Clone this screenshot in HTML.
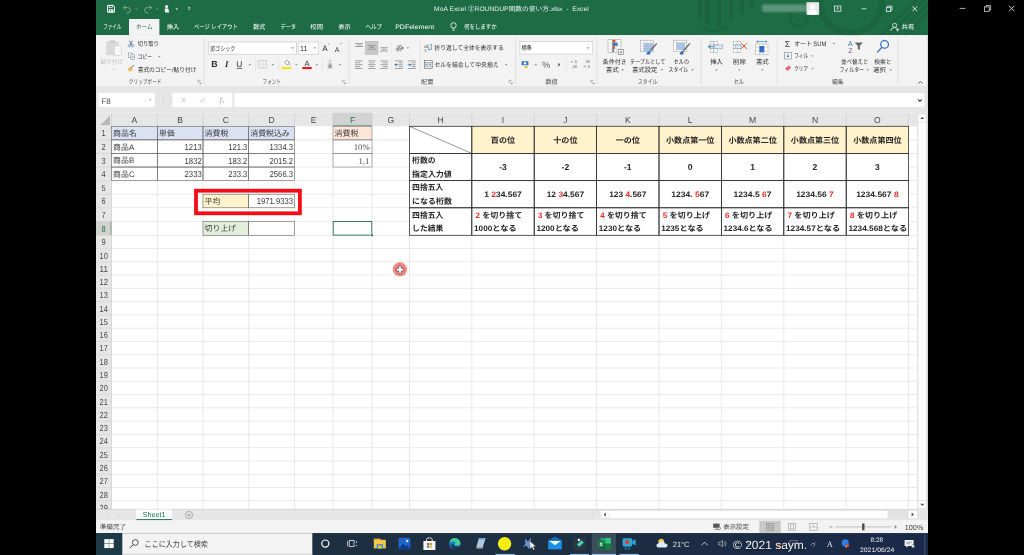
<!DOCTYPE html>
<html lang="ja">
<head>
<meta charset="utf-8">
<title>MoA Excel ②ROUNDUP関数の使い方.xlsx - Excel</title>
<style>
html,body{margin:0;padding:0;background:#000;width:1024px;height:555px;overflow:hidden}
svg{display:block;position:absolute;left:0;top:0;opacity:0.999;font-family:'Liberation Sans','Noto Sans CJK JP',sans-serif;}
text{white-space:pre;text-rendering:geometricPrecision}
</style>
</head>
<body>
<svg width="1024" height="555" viewBox="0 0 1024 555">
<rect x="0" y="0" width="1024" height="555" fill="#000000"/>
<g id="frame">
<rect x="96.00" y="0.00" width="832.00" height="533.20" fill="#ffffff" />
<rect x="96.00" y="0.00" width="832.00" height="35.20" fill="#1e6c46" />
<g fill="none" stroke="#195f3c" opacity="0.6"><circle cx="851" cy="2" r="31" stroke-width="6.5"/><circle cx="799" cy="17" r="9" stroke-width="3"/><path d="M889 35 L925 -1 M897 35 L928 4 M905 35 L928 12 M881 35 L917 -1" stroke-width="2.6"/><path d="M700 0 V19 M707.5 0 V25 M719 0 V27 M731 0 V20 M742 0 V14 M752 0 V9" stroke-width="4"/><path d="M703 27 q10 8 24 0" stroke-width="2.5"/></g>
<rect x="96.00" y="0.00" width="832.00" height="35.20" fill="none" />
<rect x="96.00" y="35.20" width="832.00" height="50.50" fill="#f3f3f3" />
<rect x="96.00" y="85.70" width="832.00" height="27.00" fill="#e6e6e6" />
</g>
<g id="titlebar">
<path d="M107.6 5.4 h5.8 l1 1 v5.8 h-6.8 z" fill="none" stroke="#ffffff" stroke-width="1.0" />
<rect x="109.10" y="5.40" width="3.20" height="2.20" fill="none" stroke="#ffffff" stroke-width="0.7" />
<rect x="108.80" y="9.30" width="4.40" height="2.90" fill="#ffffff" />
<rect x="110.10" y="10.20" width="0.90" height="1.20" fill="#1e6c46" />
<path d="M123.4 7.6000000000000005 h4.4 a2.6 2.6 0 0 1 0 5.2 h-1.2 M123.4 7.6000000000000005 l2.2 -2.2 M123.4 7.6000000000000005 l2.2 2.2" fill="none" stroke="#7fae95" stroke-width="0.9" />
<path d="M135.2 8.600000000000001 h2.2 l-1.1 1.2 z" fill="#7fae95" />
<path d="M151.6 7.6000000000000005 h-4.4 a2.6 2.6 0 0 0 0 5.2 h1.2 M151.6 7.6000000000000005 l-2.2 -2.2 M151.6 7.6000000000000005 l-2.2 2.2" fill="none" stroke="#7fae95" stroke-width="0.9" />
<path d="M156.1 8.600000000000001 h2.2 l-1.1 1.2 z" fill="#7fae95" />
<circle cx="166.60" cy="6.60" r="1.50" fill="#ffffff" />
<path d="M164.6 9.0 q2 -1.6 4 0 v2.2 q0.8 0 0.8 1.4 h-4.2 z" fill="#ffffff" />
<path d="M175.5 8.5 h2.6 l-1.3 1.4 z" fill="#ffffff" />
<path d="M187.9 8.700000000000001 h2.6 l-1.3 1.4 z" fill="#ffffff" />
<line x1="187.90" y1="7.30" x2="190.50" y2="7.30" stroke="#ffffff" stroke-width="0.6" />
<text x="434.10" y="11.10" font-size="6.4" fill="#e4efe8"  textLength="154.60" lengthAdjust="spacingAndGlyphs">MoA Excel ②ROUNDUP関数の使い方.xlsx  -  Excel</text>
<rect x="762" y="4.5" width="46" height="7.5" fill="#8fb9a3" opacity="0.55" rx="2" style="filter:blur(1.2px)"/>
<rect x="806.50" y="2.20" width="12.60" height="12.60" fill="#e8e8e8" />
<circle cx="812.80" cy="6.80" r="2.50" fill="#ffffff" />
<path d="M808.2 14.8 q0 -5 4.6 -5 q4.6 0 4.6 5 z" fill="#ffffff" />
<rect x="834.50" y="6.00" width="6.40" height="5.20" fill="none" stroke="#ffffff" stroke-width="0.7" />
<path d="M837.7 7.4 v2.6 M836.6 8.4 l1.1 -1.1 l1.1 1.1" fill="none" stroke="#ffffff" stroke-width="0.6" />
<line x1="861.50" y1="8.80" x2="866.50" y2="8.80" stroke="#ffffff" stroke-width="0.7" />
<rect x="886.30" y="7.30" width="4.40" height="4.20" fill="none" stroke="#ffffff" stroke-width="0.7" />
<path d="M887.6 7.3 v-1.2 h4.4 v4.2 h-1.3" fill="none" stroke="#ffffff" stroke-width="0.7" />
<path d="M912.4 6.4 l4.8 4.8 M917.2 6.4 l-4.8 4.8" fill="none" stroke="#ffffff" stroke-width="0.8" />
</g>
<g id="tabs">
<rect x="129.00" y="19.00" width="30.40" height="16.30" fill="#f3f3f3" />
<text x="103.20" y="28.60" font-size="6.4" fill="#ffffff"  textLength="18.20" lengthAdjust="spacingAndGlyphs">ファイル</text>
<text x="136.00" y="28.60" font-size="6.4" fill="#1e6c46"  textLength="16.40" lengthAdjust="spacingAndGlyphs">ホーム</text>
<text x="166.80" y="28.60" font-size="6.4" fill="#ffffff"  textLength="12.60" lengthAdjust="spacingAndGlyphs">挿入</text>
<text x="194.00" y="28.60" font-size="6.4" fill="#ffffff"  textLength="44.00" lengthAdjust="spacingAndGlyphs">ページ レイアウト</text>
<text x="253.20" y="28.60" font-size="6.4" fill="#ffffff"  textLength="12.00" lengthAdjust="spacingAndGlyphs">数式</text>
<text x="280.40" y="28.60" font-size="6.4" fill="#ffffff"  textLength="15.60" lengthAdjust="spacingAndGlyphs">データ</text>
<text x="310.30" y="28.60" font-size="6.4" fill="#ffffff"  textLength="12.70" lengthAdjust="spacingAndGlyphs">校閲</text>
<text x="338.20" y="28.60" font-size="6.4" fill="#ffffff"  textLength="12.60" lengthAdjust="spacingAndGlyphs">表示</text>
<text x="365.40" y="28.60" font-size="6.4" fill="#ffffff"  textLength="16.70" lengthAdjust="spacingAndGlyphs">ヘルプ</text>
<text x="395.20" y="28.60" font-size="6.4" fill="#ffffff"  textLength="39.00" lengthAdjust="spacingAndGlyphs">PDFelement</text>
<circle cx="453.50" cy="25.40" r="2.70" fill="none" stroke="#ffffff" stroke-width="0.8" />
<path d="M452.3 28.9 h2.4 M452.5 30.3 h2" fill="none" stroke="#ffffff" stroke-width="0.7" />
<text x="463.90" y="28.60" font-size="6.4" fill="#ffffff"  textLength="32.90" lengthAdjust="spacingAndGlyphs">何をしますか</text>
<circle cx="894.60" cy="25.40" r="2.10" fill="none" stroke="#ffffff" stroke-width="0.7" />
<path d="M890.8 31 q0 -3.4 3.8 -3.4 q1.6 0 2.4 0.6 M897.6 28.2 v3.2 M896 29.8 h3.2" fill="none" stroke="#ffffff" stroke-width="0.7" />
<text x="901.50" y="29.00" font-size="6.4" fill="#ffffff" >共有</text>
</g>
<g id="ribbon-clipboard">
<rect x="106.20" y="41.60" width="12.40" height="13.60" fill="#d9d9d9" rx="0.8"/>
<rect x="109.40" y="40.20" width="6.00" height="2.60" fill="#cfcfcf" rx="0.8"/>
<rect x="114.30" y="45.80" width="7.50" height="9.80" fill="#f7f7f7" stroke="#d0d0d0" stroke-width="0.6" />
<text x="100.80" y="64.40" font-size="6.4" fill="#bdbdbd"  textLength="22.10" lengthAdjust="spacingAndGlyphs">貼り付け</text>
<path d="M112.40 69.35 h2.60 l-1.30 1.30 z" fill="#c8c8c8" />
<path d="M129.2 40.6 L132 45 M132.6 40.6 L129.8 45" fill="none" stroke="#555" stroke-width="0.7" />
<circle cx="129.30" cy="45.80" r="1.20" fill="none" stroke="#3a78c6" stroke-width="0.6" />
<circle cx="132.50" cy="45.80" r="1.20" fill="none" stroke="#3a78c6" stroke-width="0.6" />
<text x="137.70" y="46.20" font-size="6.4" fill="#303030"  textLength="21.10" lengthAdjust="spacingAndGlyphs">切り取り</text>
<rect x="128.60" y="53.00" width="3.60" height="4.60" fill="#fff" stroke="#777" stroke-width="0.5" />
<rect x="130.80" y="54.80" width="3.60" height="4.60" fill="#fff" stroke="#777" stroke-width="0.5" />
<line x1="131.50" y1="56.60" x2="133.70" y2="56.60" stroke="#3a78c6" stroke-width="0.5" />
<line x1="131.50" y1="57.80" x2="133.70" y2="57.80" stroke="#3a78c6" stroke-width="0.5" />
<text x="137.70" y="58.90" font-size="6.4" fill="#303030"  textLength="14.20" lengthAdjust="spacingAndGlyphs">コピー</text>
<path d="M158.10 56.15 h2.60 l-1.30 1.30 z" fill="#777" />
<path d="M127.6 69.2 l3.4 -2.6 l2 2.6 l-3.4 2.6 z" fill="#f0b45a" />
<path d="M131.4 67.4 l2.4 -2.2" fill="none" stroke="#555" stroke-width="0.9" />
<text x="137.70" y="71.70" font-size="6.4" fill="#303030"  textLength="58.70" lengthAdjust="spacingAndGlyphs">書式のコピー/貼り付け</text>
<text x="128.80" y="84.10" font-size="6.4" fill="#555"  textLength="32.70" lengthAdjust="spacingAndGlyphs">クリップボード</text>
<path d="M198.00 83.00 v-2.6 h2.6" fill="none" stroke="#777" stroke-width="0.5" />
<path d="M199.40 82.20 l1.6 1.6 M201.10 82.40 v1.5 h-1.5" fill="none" stroke="#777" stroke-width="0.5" />
<line x1="204.20" y1="38.00" x2="204.20" y2="84.00" stroke="#d4d4d4" stroke-width="0.6" />
</g>
<g id="ribbon-font">
<rect x="208.70" y="42.00" width="87.60" height="12.20" fill="#fff" stroke="#c6c6c6" stroke-width="0.6" />
<text x="209.90" y="50.50" font-size="6.4" fill="#303030"  textLength="25.60" lengthAdjust="spacingAndGlyphs">游ゴシック</text>
<path d="M291.30 47.55 h2.60 l-1.30 1.30 z" fill="#666" />
<rect x="298.20" y="42.00" width="20.50" height="12.20" fill="#fff" stroke="#c6c6c6" stroke-width="0.6" />
<text x="300.00" y="50.89" font-size="7.2" fill="#303030" >11</text>
<path d="M313.60 47.55 h2.60 l-1.30 1.30 z" fill="#666" />
<text x="324.80" y="51.48" font-size="8" fill="#303030" text-anchor="middle" >A</text>
<path d="M327.8 44.2 l0.9 -1 l0.9 1 z" fill="#3a78c6" />
<text x="337.20" y="51.52" font-size="7" fill="#303030" text-anchor="middle" >A</text>
<path d="M340 43.4 l0.9 1 l0.9 -1 z" fill="#3a78c6" />
<text x="214.50" y="67.47" font-size="8.8" fill="#303030" text-anchor="middle" font-weight="bold" >B</text>
<text x="226.70" y="67.47" font-size="8.8" fill="#303030" text-anchor="middle" font-weight="bold" font-family="'Liberation Serif',serif" font-style="italic">I</text>
<text x="239.40" y="66.82" font-size="8.4" fill="#303030" text-anchor="middle" >U</text>
<line x1="236.60" y1="68.40" x2="242.20" y2="68.40" stroke="#303030" stroke-width="0.7" />
<path d="M248.50 64.15 h2.60 l-1.30 1.30 z" fill="#777" />
<line x1="255.60" y1="58.50" x2="255.60" y2="70.50" stroke="#dcdcdc" stroke-width="0.6" />
<rect x="258.80" y="60.40" width="7.60" height="7.60" fill="none" stroke="#bdbdbd" stroke-width="0.6" />
<line x1="262.60" y1="60.40" x2="262.60" y2="68.00" stroke="#cfcfcf" stroke-width="0.5" />
<line x1="258.80" y1="64.20" x2="266.40" y2="64.20" stroke="#cfcfcf" stroke-width="0.5" />
<path d="M271.50 64.15 h2.60 l-1.30 1.30 z" fill="#777" />
<line x1="278.70" y1="58.50" x2="278.70" y2="70.50" stroke="#dcdcdc" stroke-width="0.6" />
<path d="M284.6 62.4 l2.4 -2.2 l2.6 2.6 l-2.4 2.2 z" fill="#fff" stroke="#666" stroke-width="0.6" />
<path d="M289.8 63.4 q1 1.4 0 2 q-1 -0.6 0 -2" fill="#3a78c6" />
<rect x="281.60" y="67.00" width="9.60" height="2.10" fill="#ffe600" />
<path d="M295.00 64.15 h2.60 l-1.30 1.30 z" fill="#777" />
<text x="307.00" y="65.54" font-size="7.6" fill="#303030" text-anchor="middle" >A</text>
<rect x="302.40" y="67.00" width="9.30" height="2.10" fill="#e8141c" />
<path d="M315.50 64.15 h2.60 l-1.30 1.30 z" fill="#777" />
<line x1="322.40" y1="58.50" x2="322.40" y2="70.50" stroke="#dcdcdc" stroke-width="0.6" />
<text x="330.00" y="62.70" font-size="3.6" fill="#777" text-anchor="middle" >ア</text>
<text x="330.00" y="68.14" font-size="5.4" fill="#777" text-anchor="middle" >亜</text>
<path d="M338.90 64.15 h2.60 l-1.30 1.30 z" fill="#777" />
<text x="262.60" y="84.30" font-size="6.4" fill="#555"  textLength="18.30" lengthAdjust="spacingAndGlyphs">フォント</text>
<path d="M342.60 83.00 v-2.6 h2.6" fill="none" stroke="#777" stroke-width="0.5" />
<path d="M344.00 82.20 l1.6 1.6 M345.70 82.40 v1.5 h-1.5" fill="none" stroke="#777" stroke-width="0.5" />
<line x1="348.80" y1="38.00" x2="348.80" y2="84.00" stroke="#d4d4d4" stroke-width="0.6" />
</g>
<g id="ribbon-align">
<line x1="355.20" y1="43.50" x2="363.00" y2="43.50" stroke="#808080" stroke-width="0.7" />
<line x1="356.50" y1="45.05" x2="361.70" y2="45.05" stroke="#808080" stroke-width="0.7" />
<line x1="355.20" y1="46.50" x2="363.00" y2="46.50" stroke="#808080" stroke-width="0.7" />
<rect x="365.40" y="41.30" width="12.50" height="13.20" fill="#c8c8c8" stroke="#b4b4b4" stroke-width="0.5" />
<line x1="367.80" y1="45.70" x2="375.60" y2="45.70" stroke="#808080" stroke-width="0.7" />
<line x1="369.10" y1="47.40" x2="374.30" y2="47.40" stroke="#808080" stroke-width="0.7" />
<line x1="367.80" y1="49.20" x2="375.60" y2="49.20" stroke="#808080" stroke-width="0.7" />
<line x1="380.20" y1="47.70" x2="388.00" y2="47.70" stroke="#808080" stroke-width="0.7" />
<line x1="381.50" y1="49.40" x2="386.70" y2="49.40" stroke="#808080" stroke-width="0.7" />
<line x1="380.20" y1="51.20" x2="388.00" y2="51.20" stroke="#808080" stroke-width="0.7" />
<line x1="391.30" y1="42.00" x2="391.30" y2="53.50" stroke="#dcdcdc" stroke-width="0.6" />
<text x="398.60" y="50.10" font-size="6.4" fill="#505050" text-anchor="middle" transform="rotate(-40 398.6 47.8)">ab</text>
<path d="M399.8 51.4 l3.4 -3.8 m0 0 l-1.7 0.3 m1.7 -0.3 l-0.2 1.7" fill="none" stroke="#505050" stroke-width="0.6" />
<path d="M406.60 47.55 h2.60 l-1.30 1.30 z" fill="#777" />
<line x1="420.20" y1="41.00" x2="420.20" y2="72.00" stroke="#dcdcdc" stroke-width="0.6" />
<text x="426.60" y="47.93" font-size="4.8" fill="#505050" text-anchor="middle" >ab</text>
<path d="M429.8 44.4 h1.6 v5 h-3.2 l1.1 -1.1 m-1.1 1.1 l1.1 1.1" fill="none" stroke="#2f6fc0" stroke-width="0.6" />
<text x="425.60" y="52.33" font-size="4.8" fill="#505050" text-anchor="middle" >c</text>
<text x="434.40" y="50.30" font-size="6.4" fill="#303030"  textLength="69.30" lengthAdjust="spacingAndGlyphs">折り返して全体を表示する</text>
<line x1="355.00" y1="60.90" x2="362.60" y2="60.90" stroke="#808080" stroke-width="0.7" />
<line x1="355.00" y1="62.80" x2="360.20" y2="62.80" stroke="#808080" stroke-width="0.7" />
<line x1="355.00" y1="64.70" x2="362.60" y2="64.70" stroke="#808080" stroke-width="0.7" />
<line x1="355.00" y1="66.60" x2="360.20" y2="66.60" stroke="#808080" stroke-width="0.7" />
<line x1="355.00" y1="68.50" x2="362.60" y2="68.50" stroke="#808080" stroke-width="0.7" />
<line x1="368.00" y1="60.90" x2="375.60" y2="60.90" stroke="#808080" stroke-width="0.7" />
<line x1="369.20" y1="62.80" x2="374.40" y2="62.80" stroke="#808080" stroke-width="0.7" />
<line x1="368.00" y1="64.70" x2="375.60" y2="64.70" stroke="#808080" stroke-width="0.7" />
<line x1="369.20" y1="66.60" x2="374.40" y2="66.60" stroke="#808080" stroke-width="0.7" />
<line x1="368.00" y1="68.50" x2="375.60" y2="68.50" stroke="#808080" stroke-width="0.7" />
<line x1="380.30" y1="60.90" x2="387.90" y2="60.90" stroke="#808080" stroke-width="0.7" />
<line x1="382.70" y1="62.80" x2="387.90" y2="62.80" stroke="#808080" stroke-width="0.7" />
<line x1="380.30" y1="64.70" x2="387.90" y2="64.70" stroke="#808080" stroke-width="0.7" />
<line x1="382.70" y1="66.60" x2="387.90" y2="66.60" stroke="#808080" stroke-width="0.7" />
<line x1="380.30" y1="68.50" x2="387.90" y2="68.50" stroke="#808080" stroke-width="0.7" />
<line x1="391.30" y1="58.50" x2="391.30" y2="70.50" stroke="#dcdcdc" stroke-width="0.6" />
<line x1="394.90" y1="60.90" x2="402.90" y2="60.90" stroke="#808080" stroke-width="0.7" />
<line x1="398.90" y1="62.80" x2="402.90" y2="62.80" stroke="#808080" stroke-width="0.7" />
<line x1="398.90" y1="64.70" x2="402.90" y2="64.70" stroke="#808080" stroke-width="0.7" />
<line x1="398.90" y1="66.60" x2="402.90" y2="66.60" stroke="#808080" stroke-width="0.7" />
<line x1="394.90" y1="68.50" x2="402.90" y2="68.50" stroke="#808080" stroke-width="0.7" />
<path d="M394.8 64.7 h3.4" fill="none" stroke="#2f6fc0" stroke-width="0.8" />
<path d="M396.30 63 l-1.70 1.7 l1.70 1.7 z" fill="#2f6fc0" />
<line x1="407.80" y1="60.90" x2="415.80" y2="60.90" stroke="#808080" stroke-width="0.7" />
<line x1="411.80" y1="62.80" x2="415.80" y2="62.80" stroke="#808080" stroke-width="0.7" />
<line x1="411.80" y1="64.70" x2="415.80" y2="64.70" stroke="#808080" stroke-width="0.7" />
<line x1="411.80" y1="66.60" x2="415.80" y2="66.60" stroke="#808080" stroke-width="0.7" />
<line x1="407.80" y1="68.50" x2="415.80" y2="68.50" stroke="#808080" stroke-width="0.7" />
<path d="M407.70000000000005 64.7 h3.4" fill="none" stroke="#2f6fc0" stroke-width="0.8" />
<path d="M409.60 63 l1.70 1.7 l-1.70 1.7 z" fill="#2f6fc0" />
<rect x="424.40" y="60.40" width="7.80" height="8.00" fill="none" stroke="#666" stroke-width="0.6" />
<line x1="424.40" y1="62.60" x2="432.20" y2="62.60" stroke="#666" stroke-width="0.5" />
<line x1="424.40" y1="66.20" x2="432.20" y2="66.20" stroke="#666" stroke-width="0.5" />
<path d="M425.6 64.4 h5.4 M426.6 63.6 l-1 0.8 l1 0.8 M430 63.6 l1 0.8 l-1 0.8" fill="none" stroke="#3a78c6" stroke-width="0.5" />
<text x="434.40" y="66.70" font-size="6.4" fill="#303030"  textLength="64.20" lengthAdjust="spacingAndGlyphs">セルを結合して中央揃え</text>
<path d="M505.00 64.15 h2.60 l-1.30 1.30 z" fill="#777" />
<text x="421.00" y="84.10" font-size="6.4" fill="#555"  textLength="12.40" lengthAdjust="spacingAndGlyphs">配置</text>
<path d="M509.10 83.00 v-2.6 h2.6" fill="none" stroke="#777" stroke-width="0.5" />
<path d="M510.50 82.20 l1.6 1.6 M512.20 82.40 v1.5 h-1.5" fill="none" stroke="#777" stroke-width="0.5" />
<line x1="515.60" y1="38.00" x2="515.60" y2="84.00" stroke="#d4d4d4" stroke-width="0.6" />
</g>
<g id="ribbon-number">
<rect x="519.90" y="41.60" width="72.70" height="12.40" fill="#fff" stroke="#c6c6c6" stroke-width="0.6" />
<text x="521.40" y="50.30" font-size="6.4" fill="#303030"  textLength="10.30" lengthAdjust="spacingAndGlyphs">標準</text>
<path d="M587.00 47.55 h2.60 l-1.30 1.30 z" fill="#666" />
<rect x="521.60" y="61.20" width="6.80" height="4.00" fill="#3a78c6" />
<circle cx="525.00" cy="63.20" r="1.20" fill="#fff" />
<path d="M524.6 66.6 q1.6 -0.6 3.2 0 q-1.6 1.6 -3.2 0" fill="#e9b54a" />
<rect x="524.40" y="66.00" width="3.60" height="1.80" fill="#e9b54a" rx="0.9"/>
<path d="M534.50 64.15 h2.60 l-1.30 1.30 z" fill="#777" />
<text x="546.30" y="67.54" font-size="9" fill="#666" text-anchor="middle" >%</text>
<text x="558.90" y="64.56" font-size="11" fill="#444" text-anchor="middle" font-weight="bold" font-family="'Liberation Serif',serif" >,</text>
<line x1="566.40" y1="58.50" x2="566.40" y2="70.50" stroke="#dcdcdc" stroke-width="0.6" />
<text x="575.20" y="63.37" font-size="3.8" fill="#666" text-anchor="middle" >.0</text>
<text x="574.60" y="67.77" font-size="3.8" fill="#666" text-anchor="middle" >.00</text>
<path d="M571.2 61.8 h1.8 M571.2 61.8 l0.8 -0.8 M571.2 61.8 l0.8 0.8" fill="none" stroke="#3a78c6" stroke-width="0.5" />
<text x="587.40" y="63.37" font-size="3.8" fill="#666" text-anchor="middle" >.00</text>
<text x="588.20" y="67.77" font-size="3.8" fill="#666" text-anchor="middle" >.0</text>
<path d="M583.6 66.4 h1.8 M585.4 66.4 l-0.8 -0.8 M585.4 66.4 l-0.8 0.8" fill="none" stroke="#3a78c6" stroke-width="0.5" />
<text x="545.40" y="84.10" font-size="6.4" fill="#555"  textLength="12.20" lengthAdjust="spacingAndGlyphs">数値</text>
<path d="M591.00 83.00 v-2.6 h2.6" fill="none" stroke="#777" stroke-width="0.5" />
<path d="M592.40 82.20 l1.6 1.6 M594.10 82.40 v1.5 h-1.5" fill="none" stroke="#777" stroke-width="0.5" />
<line x1="596.90" y1="38.00" x2="596.90" y2="84.00" stroke="#d4d4d4" stroke-width="0.6" />
</g>
<g id="ribbon-styles">
<rect x="608.00" y="39.60" width="13.00" height="12.60" fill="#fff" stroke="#9a9a9a" stroke-width="0.5" />
<line x1="608.00" y1="42.75" x2="621.00" y2="42.75" stroke="#b5b5b5" stroke-width="0.4" />
<line x1="608.00" y1="45.90" x2="621.00" y2="45.90" stroke="#b5b5b5" stroke-width="0.4" />
<line x1="608.00" y1="49.05" x2="621.00" y2="49.05" stroke="#b5b5b5" stroke-width="0.4" />
<line x1="612.30" y1="39.60" x2="612.30" y2="52.20" stroke="#b5b5b5" stroke-width="0.4" />
<line x1="616.60" y1="39.60" x2="616.60" y2="52.20" stroke="#b5b5b5" stroke-width="0.4" />
<rect x="612.30" y="39.80" width="3.20" height="2.90" fill="#d4562c" />
<rect x="612.30" y="42.90" width="5.40" height="2.90" fill="#3a78c6" />
<rect x="612.30" y="46.10" width="2.60" height="2.90" fill="#d4562c" />
<rect x="612.30" y="49.20" width="1.60" height="2.90" fill="#3a78c6" />
<rect x="618.20" y="49.60" width="5.40" height="5.00" fill="#fff" stroke="#555" stroke-width="0.5" />
<path d="M619.6 51.6 h2.6 M619.6 52.8 h2.6 M621.6 50.6 l-1.4 3" fill="none" stroke="#555" stroke-width="0.4" />
<text x="602.60" y="64.40" font-size="6.4" fill="#303030"  textLength="24.15" lengthAdjust="spacingAndGlyphs">条件付き</text>
<text x="605.75" y="71.90" font-size="6.4" fill="#303030"  textLength="13.15" lengthAdjust="spacingAndGlyphs">書式</text>
<path d="M621.30 69.35 h2.60 l-1.30 1.30 z" fill="#777" />
<rect x="640.40" y="40.20" width="13.20" height="11.60" fill="#fff" stroke="#9a9a9a" stroke-width="0.5" />
<rect x="643.60" y="43.20" width="10.00" height="8.60" fill="#a9c6ea" />
<line x1="640.40" y1="43.10" x2="653.60" y2="43.10" stroke="#b0b0b0" stroke-width="0.4" />
<line x1="640.40" y1="46.00" x2="653.60" y2="46.00" stroke="#b0b0b0" stroke-width="0.4" />
<line x1="640.40" y1="48.90" x2="653.60" y2="48.90" stroke="#b0b0b0" stroke-width="0.4" />
<line x1="643.70" y1="40.20" x2="643.70" y2="51.80" stroke="#b0b0b0" stroke-width="0.4" />
<line x1="647.00" y1="40.20" x2="647.00" y2="51.80" stroke="#b0b0b0" stroke-width="0.4" />
<line x1="650.30" y1="40.20" x2="650.30" y2="51.80" stroke="#b0b0b0" stroke-width="0.4" />
<path d="M656.8 43.4 l-6.6 7.4" fill="none" stroke="#666" stroke-width="1.3" />
<path d="M646.4 54.6 q0.4 -3.6 3.6 -3.6 q1 1.4 0 3.6 z" fill="#2f6fc0" />
<text x="630.10" y="64.40" font-size="6.4" fill="#303030"  textLength="35.30" lengthAdjust="spacingAndGlyphs">テーブルとして</text>
<text x="632.00" y="71.90" font-size="6.4" fill="#303030"  textLength="25.30" lengthAdjust="spacingAndGlyphs">書式設定</text>
<path d="M660.70 69.35 h2.60 l-1.30 1.30 z" fill="#777" />
<rect x="673.60" y="40.20" width="13.20" height="11.00" fill="#fff" stroke="#9a9a9a" stroke-width="0.5" />
<rect x="676.20" y="42.60" width="9.00" height="7.40" fill="#a9c6ea" />
<line x1="673.60" y1="42.60" x2="686.80" y2="42.60" stroke="#b0b0b0" stroke-width="0.4" />
<line x1="676.20" y1="40.20" x2="676.20" y2="51.20" stroke="#b0b0b0" stroke-width="0.4" />
<path d="M690 43.4 l-6.6 7.4" fill="none" stroke="#666" stroke-width="1.3" />
<path d="M679.6 54.6 q0.4 -3.6 3.6 -3.6 q1 1.4 0 3.6 z" fill="#2f6fc0" />
<text x="673.60" y="64.40" font-size="6.4" fill="#303030"  textLength="15.60" lengthAdjust="spacingAndGlyphs">セルの</text>
<text x="668.60" y="71.90" font-size="6.4" fill="#303030"  textLength="19.65" lengthAdjust="spacingAndGlyphs">スタイル</text>
<path d="M691.30 69.35 h2.60 l-1.30 1.30 z" fill="#777" />
<text x="638.00" y="84.10" font-size="6.4" fill="#555"  textLength="19.30" lengthAdjust="spacingAndGlyphs">スタイル</text>
<line x1="701.00" y1="38.00" x2="701.00" y2="84.00" stroke="#d4d4d4" stroke-width="0.6" />
</g>
<g id="ribbon-cells">
<rect x="710.20" y="41.40" width="3.60" height="3.60" fill="#fff" stroke="#9a9a9a" stroke-width="0.45" />
<rect x="713.80" y="41.40" width="3.60" height="3.60" fill="#fff" stroke="#9a9a9a" stroke-width="0.45" />
<rect x="710.20" y="45.00" width="3.60" height="3.60" fill="#fff" stroke="#9a9a9a" stroke-width="0.45" />
<rect x="713.80" y="45.00" width="3.60" height="3.60" fill="#fff" stroke="#9a9a9a" stroke-width="0.45" />
<rect x="710.20" y="48.60" width="3.60" height="3.60" fill="#fff" stroke="#9a9a9a" stroke-width="0.45" />
<rect x="713.80" y="48.60" width="3.60" height="3.60" fill="#fff" stroke="#9a9a9a" stroke-width="0.45" />
<rect x="714.40" y="45.00" width="8.40" height="3.60" fill="#dfeaf7" stroke="#6b93c9" stroke-width="0.5" />
<path d="M708.4 46.8 h5 M708.4 46.8 l1.8 -1.8 M708.4 46.8 l1.8 1.8" fill="none" stroke="#2f6fc0" stroke-width="0.9" />
<text x="716.60" y="64.20" font-size="6.4" fill="#303030" text-anchor="middle" >挿入</text>
<path d="M715.30 69.45 h2.60 l-1.30 1.30 z" fill="#777" />
<rect x="733.60" y="41.40" width="3.60" height="3.60" fill="#fff" stroke="#9a9a9a" stroke-width="0.45" />
<rect x="737.20" y="41.40" width="3.60" height="3.60" fill="#fff" stroke="#9a9a9a" stroke-width="0.45" />
<rect x="733.60" y="45.00" width="3.60" height="3.60" fill="#fff" stroke="#9a9a9a" stroke-width="0.45" />
<rect x="737.20" y="45.00" width="3.60" height="3.60" fill="#fff" stroke="#9a9a9a" stroke-width="0.45" />
<rect x="733.60" y="48.60" width="3.60" height="3.60" fill="#fff" stroke="#9a9a9a" stroke-width="0.45" />
<rect x="737.20" y="48.60" width="3.60" height="3.60" fill="#fff" stroke="#9a9a9a" stroke-width="0.45" />
<rect x="735.60" y="45.00" width="6.00" height="3.60" fill="#dfeaf7" stroke="#6b93c9" stroke-width="0.5" />
<path d="M741.4 43.4 l5.4 5.4 M746.8 43.4 l-5.4 5.4" fill="none" stroke="#d4562c" stroke-width="1" />
<text x="739.40" y="64.20" font-size="6.4" fill="#303030" text-anchor="middle" >削除</text>
<path d="M738.10 69.45 h2.60 l-1.30 1.30 z" fill="#777" />
<rect x="755.60" y="44.00" width="12.40" height="10.40" fill="#fff" stroke="#9a9a9a" stroke-width="0.45" />
<line x1="755.60" y1="47.40" x2="768.00" y2="47.40" stroke="#b0b0b0" stroke-width="0.4" />
<line x1="755.60" y1="51.00" x2="768.00" y2="51.00" stroke="#b0b0b0" stroke-width="0.4" />
<line x1="759.40" y1="44.00" x2="759.40" y2="54.40" stroke="#b0b0b0" stroke-width="0.4" />
<line x1="764.20" y1="44.00" x2="764.20" y2="54.40" stroke="#b0b0b0" stroke-width="0.4" />
<rect x="759.40" y="46.00" width="4.80" height="6.40" fill="#2f6fc0" />
<path d="M756.6 41.6 h10.4 M756.6 41.6 l1.4 -1.2 M756.6 41.6 l1.4 1.2 M767 41.6 l-1.4 -1.2 M767 41.6 l-1.4 1.2" fill="none" stroke="#2f6fc0" stroke-width="0.6" />
<text x="762.30" y="64.20" font-size="6.4" fill="#303030" text-anchor="middle" >書式</text>
<path d="M761.00 69.45 h2.60 l-1.30 1.30 z" fill="#777" />
<text x="733.70" y="84.30" font-size="6.4" fill="#555"  textLength="10.30" lengthAdjust="spacingAndGlyphs">セル</text>
<line x1="777.10" y1="38.00" x2="777.10" y2="84.00" stroke="#d4d4d4" stroke-width="0.6" />
</g>
<g id="ribbon-editing">
<text x="787.40" y="46.50" font-size="8.6" fill="#444" text-anchor="middle" >Σ</text>
<text x="794.30" y="45.60" font-size="6.4" fill="#303030"  textLength="32.00" lengthAdjust="spacingAndGlyphs">オート SUM</text>
<path d="M832.50 42.95 h2.60 l-1.30 1.30 z" fill="#777" />
<rect x="784.60" y="52.40" width="6.60" height="6.60" fill="#fff" stroke="#666" stroke-width="0.5" />
<path d="M787.9 53.6 v3.4 M786.4 55.6 l1.5 1.5 l1.5 -1.5" fill="none" stroke="#2f6fc0" stroke-width="0.8" />
<text x="794.30" y="58.10" font-size="6.4" fill="#303030"  textLength="13.70" lengthAdjust="spacingAndGlyphs">フィル</text>
<path d="M811.20 55.55 h2.60 l-1.30 1.30 z" fill="#777" />
<path d="M785 68.6 l3.6 -3.2 l2.6 2.4 l-3.6 3.2 z" fill="#e8677a" />
<text x="794.30" y="70.70" font-size="6.4" fill="#303030"  textLength="13.70" lengthAdjust="spacingAndGlyphs">クリア</text>
<path d="M811.20 68.15 h2.60 l-1.30 1.30 z" fill="#777" />
<text x="850.40" y="45.72" font-size="7" fill="#2f6fc0" text-anchor="middle" >A</text>
<text x="850.40" y="52.52" font-size="7" fill="#8a4fb0" text-anchor="middle" >Z</text>
<path d="M854.8 42.6 h8 l-3 3.4 v4 l-2 -1 v-3 z" fill="#666" />
<text x="841.10" y="64.20" font-size="6.4" fill="#303030"  textLength="27.40" lengthAdjust="spacingAndGlyphs">並べ替えと</text>
<text x="839.50" y="72.20" font-size="6.4" fill="#303030"  textLength="24.50" lengthAdjust="spacingAndGlyphs">フィルター</text>
<path d="M866.50 69.55 h2.60 l-1.30 1.30 z" fill="#777" />
<circle cx="884.60" cy="44.40" r="3.80" fill="#fff" stroke="#2f6fc0" stroke-width="1.3" />
<path d="M881.8 47.4 l-4.6 5" fill="none" stroke="#2f6fc0" stroke-width="1.4" />
<text x="874.20" y="64.20" font-size="6.4" fill="#303030"  textLength="17.20" lengthAdjust="spacingAndGlyphs">検索と</text>
<text x="873.10" y="72.20" font-size="6.4" fill="#303030"  textLength="12.60" lengthAdjust="spacingAndGlyphs">選択</text>
<path d="M889.40 69.55 h2.60 l-1.30 1.30 z" fill="#777" />
<text x="832.00" y="84.30" font-size="6.4" fill="#555"  textLength="11.40" lengthAdjust="spacingAndGlyphs">編集</text>
<line x1="898.20" y1="38.00" x2="898.20" y2="84.00" stroke="#d4d4d4" stroke-width="0.6" />
<path d="M918.2 83.6 l2.2 -2.2 l2.2 2.2" fill="none" stroke="#555" stroke-width="0.9" />
</g>
<g id="formulabar">
<rect x="98.60" y="92.80" width="56.20" height="14.20" fill="#fff" />
<text x="101.40" y="103.58" font-size="8" fill="#555" >F8</text>
<path d="M149.20 99.50 h2.00 l-1.00 1.00 z" fill="#666" />
<circle cx="163.30" cy="97.60" r="0.45" fill="#9a9a9a" />
<circle cx="163.30" cy="99.80" r="0.45" fill="#9a9a9a" />
<circle cx="163.30" cy="102.00" r="0.45" fill="#9a9a9a" />
<rect x="172.50" y="92.80" width="59.70" height="14.20" fill="#fff" />
<path d="M181.4 97.6 l4.4 4.6 M185.8 97.6 l-4.4 4.6" fill="none" stroke="#b0b0b0" stroke-width="0.7" />
<path d="M199.6 100.2 l1.8 2 l3.4 -4.4" fill="none" stroke="#b0b0b0" stroke-width="0.7" />
<text x="220.60" y="102.88" font-size="8" fill="#a8a8a8" text-anchor="middle" font-family="'Liberation Serif',serif" font-style="italic">f</text>
<text x="223.20" y="103.14" font-size="5.4" fill="#a8a8a8" text-anchor="middle" font-family="'Liberation Serif',serif" font-style="italic">x</text>
<rect x="234.50" y="93.10" width="690.10" height="13.70" fill="#fff" />
<path d="M917.9 99.4 l2 2 l2 -2" fill="none" stroke="#444" stroke-width="1.1" />
</g>
<g id="headers">
<rect x="96.00" y="112.70" width="821.30" height="13.60" fill="#e6e6e6" />
<rect x="96.00" y="126.30" width="15.50" height="383.00" fill="#e6e6e6" />
<path d="M110 115.4 v9.8 h-9.8 z" fill="#b9b9b9" />
<rect x="333.00" y="112.70" width="39.00" height="13.60" fill="#d2d2d2" />
<line x1="333.00" y1="126.00" x2="372.00" y2="126.00" stroke="#217346" stroke-width="0.9" />
<rect x="96.00" y="221.35" width="15.50" height="13.95" fill="#d2d2d2" />
<line x1="111.20" y1="221.35" x2="111.20" y2="235.30" stroke="#217346" stroke-width="0.9" />
<text x="134.40" y="122.60" font-size="8.6" fill="#4a4a4a" text-anchor="middle" >A</text>
<line x1="157.30" y1="113.50" x2="157.30" y2="126.30" stroke="#c9c9c9" stroke-width="0.6" />
<text x="180.15" y="122.60" font-size="8.6" fill="#4a4a4a" text-anchor="middle" >B</text>
<line x1="203.00" y1="113.50" x2="203.00" y2="126.30" stroke="#c9c9c9" stroke-width="0.6" />
<text x="225.85" y="122.60" font-size="8.6" fill="#4a4a4a" text-anchor="middle" >C</text>
<line x1="248.70" y1="113.50" x2="248.70" y2="126.30" stroke="#c9c9c9" stroke-width="0.6" />
<text x="271.55" y="122.60" font-size="8.6" fill="#4a4a4a" text-anchor="middle" >D</text>
<line x1="294.40" y1="113.50" x2="294.40" y2="126.30" stroke="#c9c9c9" stroke-width="0.6" />
<text x="313.70" y="122.60" font-size="8.6" fill="#4a4a4a" text-anchor="middle" >E</text>
<line x1="333.00" y1="113.50" x2="333.00" y2="126.30" stroke="#c9c9c9" stroke-width="0.6" />
<text x="352.50" y="122.60" font-size="8.6" fill="#217346" text-anchor="middle" >F</text>
<line x1="372.00" y1="113.50" x2="372.00" y2="126.30" stroke="#c9c9c9" stroke-width="0.6" />
<text x="390.75" y="122.60" font-size="8.6" fill="#4a4a4a" text-anchor="middle" >G</text>
<line x1="409.50" y1="113.50" x2="409.50" y2="126.30" stroke="#c9c9c9" stroke-width="0.6" />
<text x="440.65" y="122.60" font-size="8.6" fill="#4a4a4a" text-anchor="middle" >H</text>
<line x1="471.80" y1="113.50" x2="471.80" y2="126.30" stroke="#c9c9c9" stroke-width="0.6" />
<text x="503.00" y="122.60" font-size="8.6" fill="#4a4a4a" text-anchor="middle" >I</text>
<line x1="534.20" y1="113.50" x2="534.20" y2="126.30" stroke="#c9c9c9" stroke-width="0.6" />
<text x="565.40" y="122.60" font-size="8.6" fill="#4a4a4a" text-anchor="middle" >J</text>
<line x1="596.60" y1="113.50" x2="596.60" y2="126.30" stroke="#c9c9c9" stroke-width="0.6" />
<text x="627.80" y="122.60" font-size="8.6" fill="#4a4a4a" text-anchor="middle" >K</text>
<line x1="659.00" y1="113.50" x2="659.00" y2="126.30" stroke="#c9c9c9" stroke-width="0.6" />
<text x="690.20" y="122.60" font-size="8.6" fill="#4a4a4a" text-anchor="middle" >L</text>
<line x1="721.40" y1="113.50" x2="721.40" y2="126.30" stroke="#c9c9c9" stroke-width="0.6" />
<text x="752.60" y="122.60" font-size="8.6" fill="#4a4a4a" text-anchor="middle" >M</text>
<line x1="783.80" y1="113.50" x2="783.80" y2="126.30" stroke="#c9c9c9" stroke-width="0.6" />
<text x="815.00" y="122.60" font-size="8.6" fill="#4a4a4a" text-anchor="middle" >N</text>
<line x1="846.20" y1="113.50" x2="846.20" y2="126.30" stroke="#c9c9c9" stroke-width="0.6" />
<text x="877.40" y="122.60" font-size="8.6" fill="#4a4a4a" text-anchor="middle" >O</text>
<line x1="908.60" y1="113.50" x2="908.60" y2="126.30" stroke="#c9c9c9" stroke-width="0.6" />
<line x1="111.50" y1="113.50" x2="111.50" y2="509.20" stroke="#cdcdcd" stroke-width="0.7" />
<text x="101.62" y="136.46" font-size="8.8" fill="#4a4a4a"  textLength="4.15" lengthAdjust="spacingAndGlyphs">1</text>
<line x1="96.00" y1="139.88" x2="111.50" y2="139.88" stroke="#cfcfcf" stroke-width="0.5" />
<text x="101.62" y="150.04" font-size="8.8" fill="#4a4a4a"  textLength="4.15" lengthAdjust="spacingAndGlyphs">2</text>
<line x1="96.00" y1="153.46" x2="111.50" y2="153.46" stroke="#cfcfcf" stroke-width="0.5" />
<text x="101.62" y="163.62" font-size="8.8" fill="#4a4a4a"  textLength="4.15" lengthAdjust="spacingAndGlyphs">3</text>
<line x1="96.00" y1="167.04" x2="111.50" y2="167.04" stroke="#cfcfcf" stroke-width="0.5" />
<text x="101.62" y="177.20" font-size="8.8" fill="#4a4a4a"  textLength="4.15" lengthAdjust="spacingAndGlyphs">4</text>
<line x1="96.00" y1="180.62" x2="111.50" y2="180.62" stroke="#cfcfcf" stroke-width="0.5" />
<text x="101.62" y="190.78" font-size="8.8" fill="#4a4a4a"  textLength="4.15" lengthAdjust="spacingAndGlyphs">5</text>
<line x1="96.00" y1="194.20" x2="111.50" y2="194.20" stroke="#cfcfcf" stroke-width="0.5" />
<text x="101.62" y="204.36" font-size="8.8" fill="#4a4a4a"  textLength="4.15" lengthAdjust="spacingAndGlyphs">6</text>
<line x1="96.00" y1="207.78" x2="111.50" y2="207.78" stroke="#cfcfcf" stroke-width="0.5" />
<text x="101.62" y="217.93" font-size="8.8" fill="#4a4a4a"  textLength="4.15" lengthAdjust="spacingAndGlyphs">7</text>
<line x1="96.00" y1="221.35" x2="111.50" y2="221.35" stroke="#cfcfcf" stroke-width="0.5" />
<text x="101.62" y="231.69" font-size="8.8" fill="#217346"  textLength="4.15" lengthAdjust="spacingAndGlyphs">8</text>
<line x1="96.00" y1="235.30" x2="111.50" y2="235.30" stroke="#cfcfcf" stroke-width="0.5" />
<text x="101.62" y="245.27" font-size="8.8" fill="#4a4a4a"  textLength="4.15" lengthAdjust="spacingAndGlyphs">9</text>
<line x1="96.00" y1="248.50" x2="111.50" y2="248.50" stroke="#cfcfcf" stroke-width="0.5" />
<text x="99.55" y="258.51" font-size="8.8" fill="#4a4a4a"  textLength="8.30" lengthAdjust="spacingAndGlyphs">10</text>
<line x1="96.00" y1="261.78" x2="111.50" y2="261.78" stroke="#cfcfcf" stroke-width="0.5" />
<text x="99.55" y="271.79" font-size="8.8" fill="#4a4a4a"  textLength="8.30" lengthAdjust="spacingAndGlyphs">11</text>
<line x1="96.00" y1="275.06" x2="111.50" y2="275.06" stroke="#cfcfcf" stroke-width="0.5" />
<text x="99.55" y="285.07" font-size="8.8" fill="#4a4a4a"  textLength="8.30" lengthAdjust="spacingAndGlyphs">12</text>
<line x1="96.00" y1="288.34" x2="111.50" y2="288.34" stroke="#cfcfcf" stroke-width="0.5" />
<text x="99.55" y="298.35" font-size="8.8" fill="#4a4a4a"  textLength="8.30" lengthAdjust="spacingAndGlyphs">13</text>
<line x1="96.00" y1="301.62" x2="111.50" y2="301.62" stroke="#cfcfcf" stroke-width="0.5" />
<text x="99.55" y="311.63" font-size="8.8" fill="#4a4a4a"  textLength="8.30" lengthAdjust="spacingAndGlyphs">14</text>
<line x1="96.00" y1="314.90" x2="111.50" y2="314.90" stroke="#cfcfcf" stroke-width="0.5" />
<text x="99.55" y="324.91" font-size="8.8" fill="#4a4a4a"  textLength="8.30" lengthAdjust="spacingAndGlyphs">15</text>
<line x1="96.00" y1="328.18" x2="111.50" y2="328.18" stroke="#cfcfcf" stroke-width="0.5" />
<text x="99.55" y="338.19" font-size="8.8" fill="#4a4a4a"  textLength="8.30" lengthAdjust="spacingAndGlyphs">16</text>
<line x1="96.00" y1="341.46" x2="111.50" y2="341.46" stroke="#cfcfcf" stroke-width="0.5" />
<text x="99.55" y="351.47" font-size="8.8" fill="#4a4a4a"  textLength="8.30" lengthAdjust="spacingAndGlyphs">17</text>
<line x1="96.00" y1="354.74" x2="111.50" y2="354.74" stroke="#cfcfcf" stroke-width="0.5" />
<text x="99.55" y="364.75" font-size="8.8" fill="#4a4a4a"  textLength="8.30" lengthAdjust="spacingAndGlyphs">18</text>
<line x1="96.00" y1="368.02" x2="111.50" y2="368.02" stroke="#cfcfcf" stroke-width="0.5" />
<text x="99.55" y="378.03" font-size="8.8" fill="#4a4a4a"  textLength="8.30" lengthAdjust="spacingAndGlyphs">19</text>
<line x1="96.00" y1="381.30" x2="111.50" y2="381.30" stroke="#cfcfcf" stroke-width="0.5" />
<text x="99.55" y="391.31" font-size="8.8" fill="#4a4a4a"  textLength="8.30" lengthAdjust="spacingAndGlyphs">20</text>
<line x1="96.00" y1="394.58" x2="111.50" y2="394.58" stroke="#cfcfcf" stroke-width="0.5" />
<text x="99.55" y="404.59" font-size="8.8" fill="#4a4a4a"  textLength="8.30" lengthAdjust="spacingAndGlyphs">21</text>
<line x1="96.00" y1="407.86" x2="111.50" y2="407.86" stroke="#cfcfcf" stroke-width="0.5" />
<text x="99.55" y="417.87" font-size="8.8" fill="#4a4a4a"  textLength="8.30" lengthAdjust="spacingAndGlyphs">22</text>
<line x1="96.00" y1="421.14" x2="111.50" y2="421.14" stroke="#cfcfcf" stroke-width="0.5" />
<text x="99.55" y="431.15" font-size="8.8" fill="#4a4a4a"  textLength="8.30" lengthAdjust="spacingAndGlyphs">23</text>
<line x1="96.00" y1="434.42" x2="111.50" y2="434.42" stroke="#cfcfcf" stroke-width="0.5" />
<text x="99.55" y="444.43" font-size="8.8" fill="#4a4a4a"  textLength="8.30" lengthAdjust="spacingAndGlyphs">24</text>
<line x1="96.00" y1="447.70" x2="111.50" y2="447.70" stroke="#cfcfcf" stroke-width="0.5" />
<text x="99.55" y="457.71" font-size="8.8" fill="#4a4a4a"  textLength="8.30" lengthAdjust="spacingAndGlyphs">25</text>
<line x1="96.00" y1="460.98" x2="111.50" y2="460.98" stroke="#cfcfcf" stroke-width="0.5" />
<text x="99.55" y="470.99" font-size="8.8" fill="#4a4a4a"  textLength="8.30" lengthAdjust="spacingAndGlyphs">26</text>
<line x1="96.00" y1="474.26" x2="111.50" y2="474.26" stroke="#cfcfcf" stroke-width="0.5" />
<text x="99.55" y="484.27" font-size="8.8" fill="#4a4a4a"  textLength="8.30" lengthAdjust="spacingAndGlyphs">27</text>
<line x1="96.00" y1="487.54" x2="111.50" y2="487.54" stroke="#cfcfcf" stroke-width="0.5" />
<text x="99.55" y="497.55" font-size="8.8" fill="#4a4a4a"  textLength="8.30" lengthAdjust="spacingAndGlyphs">28</text>
<line x1="96.00" y1="500.82" x2="111.50" y2="500.82" stroke="#cfcfcf" stroke-width="0.5" />
<text x="99.55" y="510.83" font-size="8.8" fill="#4a4a4a"  textLength="8.30" lengthAdjust="spacingAndGlyphs">29</text>
<line x1="96.00" y1="514.10" x2="111.50" y2="514.10" stroke="#cfcfcf" stroke-width="0.5" />
</g>
<g id="gridlines">
<line x1="157.30" y1="126.30" x2="157.30" y2="509.20" stroke="#dcdcdc" stroke-width="0.6" />
<line x1="203.00" y1="126.30" x2="203.00" y2="509.20" stroke="#dcdcdc" stroke-width="0.6" />
<line x1="248.70" y1="126.30" x2="248.70" y2="509.20" stroke="#dcdcdc" stroke-width="0.6" />
<line x1="294.40" y1="126.30" x2="294.40" y2="509.20" stroke="#dcdcdc" stroke-width="0.6" />
<line x1="333.00" y1="126.30" x2="333.00" y2="509.20" stroke="#dcdcdc" stroke-width="0.6" />
<line x1="372.00" y1="126.30" x2="372.00" y2="509.20" stroke="#dcdcdc" stroke-width="0.6" />
<line x1="409.50" y1="126.30" x2="409.50" y2="509.20" stroke="#dcdcdc" stroke-width="0.6" />
<line x1="471.80" y1="126.30" x2="471.80" y2="509.20" stroke="#dcdcdc" stroke-width="0.6" />
<line x1="534.20" y1="126.30" x2="534.20" y2="509.20" stroke="#dcdcdc" stroke-width="0.6" />
<line x1="596.60" y1="126.30" x2="596.60" y2="509.20" stroke="#dcdcdc" stroke-width="0.6" />
<line x1="659.00" y1="126.30" x2="659.00" y2="509.20" stroke="#dcdcdc" stroke-width="0.6" />
<line x1="721.40" y1="126.30" x2="721.40" y2="509.20" stroke="#dcdcdc" stroke-width="0.6" />
<line x1="783.80" y1="126.30" x2="783.80" y2="509.20" stroke="#dcdcdc" stroke-width="0.6" />
<line x1="846.20" y1="126.30" x2="846.20" y2="509.20" stroke="#dcdcdc" stroke-width="0.6" />
<line x1="908.60" y1="126.30" x2="908.60" y2="509.20" stroke="#dcdcdc" stroke-width="0.6" />
<line x1="111.50" y1="139.88" x2="917.30" y2="139.88" stroke="#dcdcdc" stroke-width="0.6" />
<line x1="111.50" y1="153.46" x2="917.30" y2="153.46" stroke="#dcdcdc" stroke-width="0.6" />
<line x1="111.50" y1="167.04" x2="917.30" y2="167.04" stroke="#dcdcdc" stroke-width="0.6" />
<line x1="111.50" y1="180.62" x2="917.30" y2="180.62" stroke="#dcdcdc" stroke-width="0.6" />
<line x1="111.50" y1="194.20" x2="917.30" y2="194.20" stroke="#dcdcdc" stroke-width="0.6" />
<line x1="111.50" y1="207.78" x2="917.30" y2="207.78" stroke="#dcdcdc" stroke-width="0.6" />
<line x1="111.50" y1="221.35" x2="917.30" y2="221.35" stroke="#dcdcdc" stroke-width="0.6" />
<line x1="111.50" y1="235.30" x2="917.30" y2="235.30" stroke="#dcdcdc" stroke-width="0.6" />
<line x1="111.50" y1="248.50" x2="917.30" y2="248.50" stroke="#dcdcdc" stroke-width="0.6" />
<line x1="111.50" y1="261.78" x2="917.30" y2="261.78" stroke="#dcdcdc" stroke-width="0.6" />
<line x1="111.50" y1="275.06" x2="917.30" y2="275.06" stroke="#dcdcdc" stroke-width="0.6" />
<line x1="111.50" y1="288.34" x2="917.30" y2="288.34" stroke="#dcdcdc" stroke-width="0.6" />
<line x1="111.50" y1="301.62" x2="917.30" y2="301.62" stroke="#dcdcdc" stroke-width="0.6" />
<line x1="111.50" y1="314.90" x2="917.30" y2="314.90" stroke="#dcdcdc" stroke-width="0.6" />
<line x1="111.50" y1="328.18" x2="917.30" y2="328.18" stroke="#dcdcdc" stroke-width="0.6" />
<line x1="111.50" y1="341.46" x2="917.30" y2="341.46" stroke="#dcdcdc" stroke-width="0.6" />
<line x1="111.50" y1="354.74" x2="917.30" y2="354.74" stroke="#dcdcdc" stroke-width="0.6" />
<line x1="111.50" y1="368.02" x2="917.30" y2="368.02" stroke="#dcdcdc" stroke-width="0.6" />
<line x1="111.50" y1="381.30" x2="917.30" y2="381.30" stroke="#dcdcdc" stroke-width="0.6" />
<line x1="111.50" y1="394.58" x2="917.30" y2="394.58" stroke="#dcdcdc" stroke-width="0.6" />
<line x1="111.50" y1="407.86" x2="917.30" y2="407.86" stroke="#dcdcdc" stroke-width="0.6" />
<line x1="111.50" y1="421.14" x2="917.30" y2="421.14" stroke="#dcdcdc" stroke-width="0.6" />
<line x1="111.50" y1="434.42" x2="917.30" y2="434.42" stroke="#dcdcdc" stroke-width="0.6" />
<line x1="111.50" y1="447.70" x2="917.30" y2="447.70" stroke="#dcdcdc" stroke-width="0.6" />
<line x1="111.50" y1="460.98" x2="917.30" y2="460.98" stroke="#dcdcdc" stroke-width="0.6" />
<line x1="111.50" y1="474.26" x2="917.30" y2="474.26" stroke="#dcdcdc" stroke-width="0.6" />
<line x1="111.50" y1="487.54" x2="917.30" y2="487.54" stroke="#dcdcdc" stroke-width="0.6" />
<line x1="111.50" y1="500.82" x2="917.30" y2="500.82" stroke="#dcdcdc" stroke-width="0.6" />
</g>
<g id="table-left">
<rect x="111.50" y="126.30" width="45.80" height="13.58" fill="#d9e1f2" />
<rect x="157.30" y="126.30" width="45.70" height="13.58" fill="#d9e1f2" />
<rect x="203.00" y="126.30" width="45.70" height="13.58" fill="#d9e1f2" />
<rect x="248.70" y="126.30" width="45.70" height="13.58" fill="#d9e1f2" />
<text x="113.10" y="136.23" font-size="7.9" fill="#3a3a3a" >商品名</text>
<text x="158.90" y="136.23" font-size="7.9" fill="#3a3a3a" >単価</text>
<text x="204.60" y="136.23" font-size="7.9" fill="#3a3a3a" >消費税</text>
<text x="250.30" y="136.23" font-size="7.9" fill="#3a3a3a" >消費税込み</text>
<text x="113.10" y="149.81" font-size="7.9" fill="#3a3a3a" >商品A</text>
<text x="184.58" y="150.10" font-size="8.7" fill="#3a3a3a"  textLength="17.12" lengthAdjust="spacingAndGlyphs">1213</text>
<text x="228.13" y="150.10" font-size="8.7" fill="#3a3a3a"  textLength="19.27" lengthAdjust="spacingAndGlyphs">121.3</text>
<text x="269.55" y="150.10" font-size="8.7" fill="#3a3a3a"  textLength="23.55" lengthAdjust="spacingAndGlyphs">1334.3</text>
<text x="113.10" y="163.39" font-size="7.9" fill="#3a3a3a" >商品B</text>
<text x="184.58" y="163.68" font-size="8.7" fill="#3a3a3a"  textLength="17.12" lengthAdjust="spacingAndGlyphs">1832</text>
<text x="228.13" y="163.68" font-size="8.7" fill="#3a3a3a"  textLength="19.27" lengthAdjust="spacingAndGlyphs">183.2</text>
<text x="269.55" y="163.68" font-size="8.7" fill="#3a3a3a"  textLength="23.55" lengthAdjust="spacingAndGlyphs">2015.2</text>
<text x="113.10" y="176.97" font-size="7.9" fill="#3a3a3a" >商品C</text>
<text x="184.58" y="177.26" font-size="8.7" fill="#3a3a3a"  textLength="17.12" lengthAdjust="spacingAndGlyphs">2333</text>
<text x="228.13" y="177.26" font-size="8.7" fill="#3a3a3a"  textLength="19.27" lengthAdjust="spacingAndGlyphs">233.3</text>
<text x="269.55" y="177.26" font-size="8.7" fill="#3a3a3a"  textLength="23.55" lengthAdjust="spacingAndGlyphs">2566.3</text>
<rect x="111.50" y="126.30" width="45.80" height="13.58" fill="none" stroke="#6a6a6a" stroke-width="0.6" />
<rect x="157.30" y="126.30" width="45.70" height="13.58" fill="none" stroke="#6a6a6a" stroke-width="0.6" />
<rect x="203.00" y="126.30" width="45.70" height="13.58" fill="none" stroke="#6a6a6a" stroke-width="0.6" />
<rect x="248.70" y="126.30" width="45.70" height="13.58" fill="none" stroke="#6a6a6a" stroke-width="0.6" />
<rect x="111.50" y="139.88" width="45.80" height="13.58" fill="none" stroke="#6a6a6a" stroke-width="0.6" />
<rect x="157.30" y="139.88" width="45.70" height="13.58" fill="none" stroke="#6a6a6a" stroke-width="0.6" />
<rect x="203.00" y="139.88" width="45.70" height="13.58" fill="none" stroke="#6a6a6a" stroke-width="0.6" />
<rect x="248.70" y="139.88" width="45.70" height="13.58" fill="none" stroke="#6a6a6a" stroke-width="0.6" />
<rect x="111.50" y="153.46" width="45.80" height="13.58" fill="none" stroke="#6a6a6a" stroke-width="0.6" />
<rect x="157.30" y="153.46" width="45.70" height="13.58" fill="none" stroke="#6a6a6a" stroke-width="0.6" />
<rect x="203.00" y="153.46" width="45.70" height="13.58" fill="none" stroke="#6a6a6a" stroke-width="0.6" />
<rect x="248.70" y="153.46" width="45.70" height="13.58" fill="none" stroke="#6a6a6a" stroke-width="0.6" />
<rect x="111.50" y="167.04" width="45.80" height="13.58" fill="none" stroke="#6a6a6a" stroke-width="0.6" />
<rect x="157.30" y="167.04" width="45.70" height="13.58" fill="none" stroke="#6a6a6a" stroke-width="0.6" />
<rect x="203.00" y="167.04" width="45.70" height="13.58" fill="none" stroke="#6a6a6a" stroke-width="0.6" />
<rect x="248.70" y="167.04" width="45.70" height="13.58" fill="none" stroke="#6a6a6a" stroke-width="0.6" />
<rect x="203.00" y="194.20" width="45.70" height="13.58" fill="#fff2cc" />
<rect x="203.00" y="194.20" width="45.70" height="13.58" fill="none" stroke="#6a6a6a" stroke-width="0.6" />
<rect x="248.70" y="194.20" width="45.70" height="13.58" fill="none" stroke="#6a6a6a" stroke-width="0.6" />
<text x="204.60" y="204.13" font-size="7.9" fill="#3a3a3a" >平均</text>
<text x="256.71" y="204.42" font-size="8.7" fill="#3a3a3a"  textLength="36.39" lengthAdjust="spacingAndGlyphs">1971.9333</text>
<rect x="203.00" y="221.35" width="45.70" height="13.95" fill="#e2efda" />
<rect x="203.00" y="221.35" width="45.70" height="13.95" fill="none" stroke="#6a6a6a" stroke-width="0.6" />
<rect x="248.70" y="221.35" width="45.70" height="13.95" fill="none" stroke="#6a6a6a" stroke-width="0.6" />
<text x="204.60" y="231.47" font-size="7.9" fill="#3a3a3a" >切り上げ</text>
<rect x="196.00" y="190.70" width="103.90" height="22.60" fill="none" stroke="#f20d18" stroke-width="3.8" />
</g>
<g id="table-tax">
<rect x="333.00" y="126.30" width="39.00" height="13.58" fill="#fce4d6" />
<text x="334.60" y="136.23" font-size="7.9" fill="#3a3a3a" >消費税</text>
<text x="369.80" y="150.14" font-size="8.8" fill="#4a4a4a" text-anchor="end" font-family="'Liberation Serif',serif" >10%</text>
<text x="369.40" y="163.72" font-size="8.8" fill="#4a4a4a" text-anchor="end" font-family="'Liberation Serif',serif" >1.1</text>
<rect x="333.00" y="126.30" width="39.00" height="13.58" fill="none" stroke="#858585" stroke-width="0.6" />
<rect x="333.00" y="139.88" width="39.00" height="13.58" fill="none" stroke="#858585" stroke-width="0.6" />
<rect x="333.00" y="153.46" width="39.00" height="13.58" fill="none" stroke="#858585" stroke-width="0.6" />
<rect x="333.20" y="221.55" width="38.60" height="13.55" fill="#fff" stroke="#1e6c46" stroke-width="0.9" />
<rect x="370.70" y="234.00" width="2.40" height="2.40" fill="#1e6c46" stroke="#fff" stroke-width="0.5" />
</g>
<g id="table-right">
<rect x="409.50" y="126.30" width="499.10" height="109.00" fill="#ffffff" />
<rect x="471.80" y="126.30" width="62.40" height="27.16" fill="#fff2cc" />
<text x="490.85" y="142.92" font-size="7.9" fill="#262626" font-weight="bold"  textLength="24.30" lengthAdjust="spacingAndGlyphs">百の位</text>
<text x="503.00" y="170.34" font-size="8.6" fill="#262626" text-anchor="middle" font-weight="bold" >-3</text>
<text x="484.20" y="197.24" font-size="7.9" font-weight="bold" fill="#262626" textLength="37.6" lengthAdjust="spacingAndGlyphs">1 <tspan fill="#e8302a">2</tspan>34.567</text>
<text x="475.50" y="217.61" font-size="7.9" font-weight="bold" fill="#262626" textLength="46.7" lengthAdjust="spacingAndGlyphs"><tspan fill="#e8302a">2</tspan> を切り捨て</text>
<text x="474.00" y="231.37" font-size="7.9" fill="#262626" font-weight="bold"  textLength="42.70" lengthAdjust="spacingAndGlyphs">1000となる</text>
<rect x="534.20" y="126.30" width="62.40" height="27.16" fill="#fff2cc" />
<text x="553.25" y="142.92" font-size="7.9" fill="#262626" font-weight="bold"  textLength="24.30" lengthAdjust="spacingAndGlyphs">十の位</text>
<text x="565.40" y="170.34" font-size="8.6" fill="#262626" text-anchor="middle" font-weight="bold" >-2</text>
<text x="546.70" y="197.24" font-size="7.9" font-weight="bold" fill="#262626" textLength="37.4" lengthAdjust="spacingAndGlyphs">12 <tspan fill="#e8302a">3</tspan>4.567</text>
<text x="537.90" y="217.61" font-size="7.9" font-weight="bold" fill="#262626" textLength="46.5" lengthAdjust="spacingAndGlyphs"><tspan fill="#e8302a">3</tspan> を切り捨て</text>
<text x="536.40" y="231.37" font-size="7.9" fill="#262626" font-weight="bold"  textLength="42.60" lengthAdjust="spacingAndGlyphs">1200となる</text>
<rect x="596.60" y="126.30" width="62.40" height="27.16" fill="#fff2cc" />
<text x="615.65" y="142.92" font-size="7.9" fill="#262626" font-weight="bold"  textLength="24.30" lengthAdjust="spacingAndGlyphs">一の位</text>
<text x="627.80" y="170.34" font-size="8.6" fill="#262626" text-anchor="middle" font-weight="bold" >-1</text>
<text x="609.20" y="197.24" font-size="7.9" font-weight="bold" fill="#262626" textLength="37.2" lengthAdjust="spacingAndGlyphs">123 <tspan fill="#e8302a">4</tspan>.567</text>
<text x="600.30" y="217.61" font-size="7.9" font-weight="bold" fill="#262626" textLength="46.3" lengthAdjust="spacingAndGlyphs"><tspan fill="#e8302a">4</tspan> を切り捨て</text>
<text x="598.80" y="231.37" font-size="7.9" fill="#262626" font-weight="bold"  textLength="42.50" lengthAdjust="spacingAndGlyphs">1230となる</text>
<rect x="659.00" y="126.30" width="62.40" height="27.16" fill="#fff2cc" />
<text x="666.05" y="142.92" font-size="7.9" fill="#262626" font-weight="bold"  textLength="48.30" lengthAdjust="spacingAndGlyphs">小数点第一位</text>
<text x="690.20" y="170.34" font-size="8.6" fill="#262626" text-anchor="middle" font-weight="bold" >0</text>
<text x="671.20" y="197.24" font-size="7.9" font-weight="bold" fill="#262626" textLength="38" lengthAdjust="spacingAndGlyphs">1234. <tspan fill="#e8302a">5</tspan>67</text>
<text x="662.70" y="217.61" font-size="7.9" font-weight="bold" fill="#262626" textLength="47.4" lengthAdjust="spacingAndGlyphs"><tspan fill="#e8302a">5</tspan> を切り上げ</text>
<text x="661.20" y="231.37" font-size="7.9" fill="#262626" font-weight="bold"  textLength="42.60" lengthAdjust="spacingAndGlyphs">1235となる</text>
<rect x="721.40" y="126.30" width="62.40" height="27.16" fill="#fff2cc" />
<text x="728.45" y="142.92" font-size="7.9" fill="#262626" font-weight="bold"  textLength="48.30" lengthAdjust="spacingAndGlyphs">小数点第二位</text>
<text x="752.60" y="170.34" font-size="8.6" fill="#262626" text-anchor="middle" font-weight="bold" >1</text>
<text x="733.60" y="197.24" font-size="7.9" font-weight="bold" fill="#262626" textLength="38" lengthAdjust="spacingAndGlyphs">1234.5 <tspan fill="#e8302a">6</tspan>7</text>
<text x="725.10" y="217.61" font-size="7.9" font-weight="bold" fill="#262626" textLength="47.4" lengthAdjust="spacingAndGlyphs"><tspan fill="#e8302a">6</tspan> を切り上げ</text>
<text x="723.60" y="231.37" font-size="7.9" fill="#262626" font-weight="bold"  textLength="49.00" lengthAdjust="spacingAndGlyphs">1234.6となる</text>
<rect x="783.80" y="126.30" width="62.40" height="27.16" fill="#fff2cc" />
<text x="790.85" y="142.92" font-size="7.9" fill="#262626" font-weight="bold"  textLength="48.30" lengthAdjust="spacingAndGlyphs">小数点第三位</text>
<text x="815.00" y="170.34" font-size="8.6" fill="#262626" text-anchor="middle" font-weight="bold" >2</text>
<text x="796.15" y="197.24" font-size="7.9" font-weight="bold" fill="#262626" textLength="37.7" lengthAdjust="spacingAndGlyphs">1234.56 <tspan fill="#e8302a">7</tspan></text>
<text x="787.50" y="217.61" font-size="7.9" font-weight="bold" fill="#262626" textLength="47.4" lengthAdjust="spacingAndGlyphs"><tspan fill="#e8302a">7</tspan> を切り上げ</text>
<text x="786.00" y="231.37" font-size="7.9" fill="#262626" font-weight="bold"  textLength="54.20" lengthAdjust="spacingAndGlyphs">1234.57となる</text>
<rect x="846.20" y="126.30" width="62.40" height="27.16" fill="#fff2cc" />
<text x="853.25" y="142.92" font-size="7.9" fill="#262626" font-weight="bold"  textLength="48.30" lengthAdjust="spacingAndGlyphs">小数点第四位</text>
<text x="877.40" y="170.34" font-size="8.6" fill="#262626" text-anchor="middle" font-weight="bold" >3</text>
<text x="856.15" y="197.24" font-size="7.9" font-weight="bold" fill="#262626" textLength="42.5" lengthAdjust="spacingAndGlyphs">1234.567 <tspan fill="#e8302a">8</tspan></text>
<text x="849.90" y="217.61" font-size="7.9" font-weight="bold" fill="#262626" textLength="47.4" lengthAdjust="spacingAndGlyphs"><tspan fill="#e8302a">8</tspan> を切り上げ</text>
<text x="848.40" y="231.37" font-size="7.9" fill="#262626" font-weight="bold"  textLength="59.00" lengthAdjust="spacingAndGlyphs">1234.568となる</text>
<text x="412.10" y="163.29" font-size="7.9" fill="#262626" font-weight="bold"  textLength="23.40" lengthAdjust="spacingAndGlyphs">桁数の</text>
<text x="412.10" y="176.87" font-size="7.9" fill="#262626" font-weight="bold"  textLength="39.60" lengthAdjust="spacingAndGlyphs">指定入力値</text>
<text x="412.10" y="190.45" font-size="7.9" fill="#262626" font-weight="bold"  textLength="31.20" lengthAdjust="spacingAndGlyphs">四捨五入</text>
<text x="412.10" y="204.03" font-size="7.9" fill="#262626" font-weight="bold"  textLength="39.90" lengthAdjust="spacingAndGlyphs">になる桁数</text>
<text x="412.10" y="217.61" font-size="7.9" fill="#262626" font-weight="bold"  textLength="31.20" lengthAdjust="spacingAndGlyphs">四捨五入</text>
<text x="412.10" y="231.37" font-size="7.9" fill="#262626" font-weight="bold"  textLength="31.20" lengthAdjust="spacingAndGlyphs">した結果</text>
<rect x="409.50" y="126.30" width="62.30" height="27.16" fill="#ffffff" />
<line x1="409.50" y1="126.30" x2="471.80" y2="153.46" stroke="#555" stroke-width="0.6" />
<rect x="409.50" y="126.30" width="62.30" height="27.16" fill="none" stroke="#333" stroke-width="0.8" />
<rect x="409.50" y="153.46" width="62.30" height="27.16" fill="none" stroke="#333" stroke-width="0.8" />
<rect x="409.50" y="180.62" width="62.30" height="27.16" fill="none" stroke="#333" stroke-width="0.8" />
<rect x="409.50" y="207.78" width="62.30" height="27.52" fill="none" stroke="#333" stroke-width="0.8" />
<rect x="471.80" y="126.30" width="62.40" height="27.16" fill="none" stroke="#333" stroke-width="0.8" />
<rect x="471.80" y="153.46" width="62.40" height="27.16" fill="none" stroke="#333" stroke-width="0.8" />
<rect x="471.80" y="180.62" width="62.40" height="27.16" fill="none" stroke="#333" stroke-width="0.8" />
<rect x="471.80" y="207.78" width="62.40" height="27.52" fill="none" stroke="#333" stroke-width="0.8" />
<rect x="534.20" y="126.30" width="62.40" height="27.16" fill="none" stroke="#333" stroke-width="0.8" />
<rect x="534.20" y="153.46" width="62.40" height="27.16" fill="none" stroke="#333" stroke-width="0.8" />
<rect x="534.20" y="180.62" width="62.40" height="27.16" fill="none" stroke="#333" stroke-width="0.8" />
<rect x="534.20" y="207.78" width="62.40" height="27.52" fill="none" stroke="#333" stroke-width="0.8" />
<rect x="596.60" y="126.30" width="62.40" height="27.16" fill="none" stroke="#333" stroke-width="0.8" />
<rect x="596.60" y="153.46" width="62.40" height="27.16" fill="none" stroke="#333" stroke-width="0.8" />
<rect x="596.60" y="180.62" width="62.40" height="27.16" fill="none" stroke="#333" stroke-width="0.8" />
<rect x="596.60" y="207.78" width="62.40" height="27.52" fill="none" stroke="#333" stroke-width="0.8" />
<rect x="659.00" y="126.30" width="62.40" height="27.16" fill="none" stroke="#333" stroke-width="0.8" />
<rect x="659.00" y="153.46" width="62.40" height="27.16" fill="none" stroke="#333" stroke-width="0.8" />
<rect x="659.00" y="180.62" width="62.40" height="27.16" fill="none" stroke="#333" stroke-width="0.8" />
<rect x="659.00" y="207.78" width="62.40" height="27.52" fill="none" stroke="#333" stroke-width="0.8" />
<rect x="721.40" y="126.30" width="62.40" height="27.16" fill="none" stroke="#333" stroke-width="0.8" />
<rect x="721.40" y="153.46" width="62.40" height="27.16" fill="none" stroke="#333" stroke-width="0.8" />
<rect x="721.40" y="180.62" width="62.40" height="27.16" fill="none" stroke="#333" stroke-width="0.8" />
<rect x="721.40" y="207.78" width="62.40" height="27.52" fill="none" stroke="#333" stroke-width="0.8" />
<rect x="783.80" y="126.30" width="62.40" height="27.16" fill="none" stroke="#333" stroke-width="0.8" />
<rect x="783.80" y="153.46" width="62.40" height="27.16" fill="none" stroke="#333" stroke-width="0.8" />
<rect x="783.80" y="180.62" width="62.40" height="27.16" fill="none" stroke="#333" stroke-width="0.8" />
<rect x="783.80" y="207.78" width="62.40" height="27.52" fill="none" stroke="#333" stroke-width="0.8" />
<rect x="846.20" y="126.30" width="62.40" height="27.16" fill="none" stroke="#333" stroke-width="0.8" />
<rect x="846.20" y="153.46" width="62.40" height="27.16" fill="none" stroke="#333" stroke-width="0.8" />
<rect x="846.20" y="180.62" width="62.40" height="27.16" fill="none" stroke="#333" stroke-width="0.8" />
<rect x="846.20" y="207.78" width="62.40" height="27.52" fill="none" stroke="#333" stroke-width="0.8" />
</g>
<g id="cursor">
<circle cx="399.95" cy="269.40" r="7.10" fill="#f48785" />
<path d="M398.65 265.8 h2.7 v2.4499999999999997 h2.4499999999999997 v2.7 h-2.4499999999999997 v2.4499999999999997 h-2.7 v-2.4499999999999997 h-2.4499999999999997 v-2.7 h2.4499999999999997 z" fill="#ffffff" stroke="#3a2a2a" stroke-width="0.6" />
</g>
<g id="scrollbars">
<rect x="917.30" y="112.70" width="10.70" height="396.60" fill="#e6e6e6" />
<rect x="918.00" y="114.00" width="8.60" height="388.00" fill="#ffffff" stroke="#d0d0d0" stroke-width="0.5" />
<line x1="918.00" y1="122.00" x2="926.60" y2="122.00" stroke="#c8c8c8" stroke-width="0.5" />
<path d="M920.2 119 h4.2 l-2.1 -2.2 z" fill="#555" />
<line x1="918.00" y1="500.60" x2="926.60" y2="500.60" stroke="#c8c8c8" stroke-width="0.5" />
<rect x="918.00" y="500.80" width="8.60" height="8.00" fill="#ffffff" stroke="#d0d0d0" stroke-width="0.5" />
<path d="M920.2 503.8 h4.2 l-2.1 2.2 z" fill="#555" />
<rect x="926.80" y="35.20" width="1.20" height="498.00" fill="#dcdcdc" />
</g>
<g id="sheettabs">
<rect x="96.00" y="509.30" width="832.00" height="11.30" fill="#e6e6e6" />
<line x1="96.00" y1="509.30" x2="917.30" y2="509.30" stroke="#c4c4c4" stroke-width="0.6" />
<path d="M108.2 513.4 l-1.4 1.5 l1.4 1.5" fill="none" stroke="#bdbdbd" stroke-width="0.6" />
<path d="M117.8 513.4 l1.4 1.5 l-1.4 1.5" fill="none" stroke="#bdbdbd" stroke-width="0.6" />
<rect x="136.30" y="509.60" width="35.70" height="10.20" fill="#ffffff" />
<line x1="136.30" y1="519.60" x2="172.00" y2="519.60" stroke="#217346" stroke-width="1.0" />
<text x="154.20" y="516.79" font-size="7.2" fill="#217346" text-anchor="middle" >Sheet1</text>
<circle cx="189.00" cy="515.00" r="3.60" fill="none" stroke="#8a8a8a" stroke-width="0.6" />
<path d="M187.2 515 h3.6 M189 513.2 v3.6" fill="none" stroke="#8a8a8a" stroke-width="0.6" />
<circle cx="593.30" cy="512.40" r="0.45" fill="#9a9a9a" />
<circle cx="593.30" cy="514.60" r="0.45" fill="#9a9a9a" />
<circle cx="593.30" cy="516.80" r="0.45" fill="#9a9a9a" />
<rect x="600.10" y="510.40" width="317.20" height="8.40" fill="#ffffff" stroke="#d0d0d0" stroke-width="0.4" />
<line x1="609.20" y1="510.40" x2="609.20" y2="518.80" stroke="#d8d8d8" stroke-width="0.5" />
<path d="M605.8 512.5 v4.2 l-2.2 -2.1 z" fill="#555" />
<rect x="887.60" y="510.60" width="20.40" height="8.00" fill="#e2e2e2" />
<line x1="908.20" y1="510.40" x2="908.20" y2="518.80" stroke="#d0d0d0" stroke-width="0.5" />
<path d="M911.6 512.5 v4.2 l2.2 -2.1 z" fill="#555" />
</g>
<g id="statusbar">
<rect x="96.00" y="520.60" width="832.00" height="12.60" fill="#f3f3f3" />
<text x="99.80" y="529.10" font-size="6.4" fill="#444"  textLength="26.20" lengthAdjust="spacingAndGlyphs">準備完了</text>
<rect x="713.20" y="523.60" width="6.40" height="4.20" fill="#555" />
<line x1="714.60" y1="529.20" x2="718.20" y2="529.20" stroke="#555" stroke-width="0.7" />
<circle cx="719.20" cy="528.40" r="1.40" fill="#f3f3f3" stroke="#555" stroke-width="0.6" />
<text x="723.20" y="529.10" font-size="6.4" fill="#444"  textLength="25.80" lengthAdjust="spacingAndGlyphs">表示設定</text>
<rect x="759.30" y="520.80" width="21.50" height="12.40" fill="#c8c8c8" />
<rect x="766.40" y="523.40" width="7.40" height="6.80" fill="none" stroke="#8a8a8a" stroke-width="0.6" />
<line x1="766.40" y1="525.40" x2="773.80" y2="525.40" stroke="#8a8a8a" stroke-width="0.5" />
<line x1="768.80" y1="523.40" x2="768.80" y2="530.20" stroke="#8a8a8a" stroke-width="0.5" />
<line x1="771.30" y1="525.40" x2="771.30" y2="530.20" stroke="#8a8a8a" stroke-width="0.5" />
<line x1="766.40" y1="527.80" x2="773.80" y2="527.80" stroke="#8a8a8a" stroke-width="0.5" />
<rect x="788.60" y="523.40" width="7.00" height="6.80" fill="none" stroke="#999" stroke-width="0.6" />
<rect x="790.40" y="525.00" width="3.40" height="3.80" fill="none" stroke="#999" stroke-width="0.5" />
<rect x="809.80" y="523.40" width="7.40" height="6.80" fill="none" stroke="#999" stroke-width="0.6" />
<path d="M809.8 527 h3.8 v-3.6 M813.6 527 h3.6" fill="none" stroke="#999" stroke-width="0.5" />
<line x1="829.00" y1="526.90" x2="832.40" y2="526.90" stroke="#666" stroke-width="0.6" />
<line x1="835.40" y1="526.90" x2="890.60" y2="526.90" stroke="#9a9a9a" stroke-width="0.6" />
<rect x="862.10" y="523.50" width="2.40" height="6.80" fill="#4a4a4a" />
<path d="M893.8 526.9 h3.4 M895.5 525.2 v3.4" fill="none" stroke="#666" stroke-width="0.6" />
<text x="923.40" y="529.53" font-size="7.3" fill="#444" text-anchor="end" >100%</text>
</g>
<g id="taskbar">
<defs><linearGradient id="tb" x1="0" x2="1" y1="0" y2="0"><stop offset="0" stop-color="#1d3140"/><stop offset="0.55" stop-color="#1d2f42"/><stop offset="1" stop-color="#1a2949"/></linearGradient></defs>
<rect x="96.00" y="533.20" width="832.00" height="21.80" fill="url(#tb)" />
<rect x="96.00" y="533.20" width="26.30" height="21.80" fill="#1c3a48" />
<rect x="104.30" y="539.10" width="4.50" height="4.30" fill="#ffffff" />
<rect x="109.20" y="539.10" width="4.50" height="4.30" fill="#ffffff" />
<rect x="104.30" y="543.80" width="4.50" height="4.30" fill="#ffffff" />
<rect x="109.20" y="543.80" width="4.50" height="4.30" fill="#ffffff" />
<rect x="122.30" y="533.20" width="190.00" height="21.80" fill="#f3f3f3" />
<line x1="122.30" y1="533.40" x2="312.30" y2="533.40" stroke="#cfcfcf" stroke-width="0.6" />
<line x1="122.30" y1="554.20" x2="312.30" y2="554.20" stroke="#c4c4c4" stroke-width="0.8" />
<circle cx="135.30" cy="542.50" r="2.90" fill="none" stroke="#333" stroke-width="0.8" />
<path d="M133.3 544.7 l-3.8 3.4" fill="none" stroke="#333" stroke-width="0.9" />
<text x="144.60" y="547.08" font-size="8" fill="#444"  textLength="63.30" lengthAdjust="spacingAndGlyphs">ここに入力して検索</text>
<circle cx="325.30" cy="543.60" r="3.60" fill="none" stroke="#ffffff" stroke-width="1.2" />
<rect x="349.20" y="540.60" width="4.80" height="6.00" fill="none" stroke="#e6e6e6" stroke-width="0.8" />
<path d="M347.6 541 v5.2 M356.4 541 v2 M356.4 545 v1.2" fill="none" stroke="#e6e6e6" stroke-width="0.8" />
<rect x="373.80" y="538.60" width="7.00" height="3.00" fill="#e9a825" />
<rect x="373.80" y="539.80" width="12.00" height="8.60" fill="#f7c64a" />
<rect x="376.60" y="544.20" width="6.40" height="4.20" fill="#3f8fd8" />
<rect x="378.00" y="545.60" width="3.60" height="2.80" fill="#f7c64a" />
<rect x="398.60" y="537.80" width="11.60" height="11.40" fill="#1f66c8" />
<path d="M398.6 549.2 l4.4 -6 l3 3.4 l1.8 -1.6 l2.4 4.2 z" fill="#0d3d8a" />
<circle cx="407.20" cy="541.00" r="1.20" fill="#cfe4ff" />
<rect x="423.40" y="541.00" width="12.00" height="9.00" fill="#f4f4f4" />
<path d="M426.6 541 v-1.6 q0 -1.6 2.8 -1.6 q2.8 0 2.8 1.6 v1.6" fill="none" stroke="#f4f4f4" stroke-width="0.9" />
<rect x="427.00" y="543.00" width="2.20" height="2.20" fill="#e8452c" />
<rect x="429.60" y="543.00" width="2.20" height="2.20" fill="#7db43a" />
<rect x="427.00" y="545.60" width="2.20" height="2.20" fill="#2f8ee0" />
<rect x="429.60" y="545.60" width="2.20" height="2.20" fill="#f2b91e" />
<circle cx="454.70" cy="543.60" r="5.60" fill="#1877c9" />
<path d="M452 538.6 q5 -1.8 7.6 2 q1.6 2.6 0.4 4.6 h-5.4 q1.6 -2.6 -0.6 -3.6 q-2.4 -0.8 -4.4 1.4 q0.2 -3 2.4 -4.4" fill="#3fcf8e" />
<path d="M453.2 544.4 q0.6 2.6 4 2.4 q2 -0.2 3.2 -1.4 q-1.6 3.8 -5.6 3.6 q-3.4 -0.6 -3.6 -3.8 q0.8 -1.6 2 -0.8" fill="#1d3042" />
<path d="M476.2 547.6 l2.8 -9.6 h6.6 l-2.8 9.6 z" fill="#a9c9e6" />
<path d="M479 538 h6.6 l-0.5 1.6 h-6.6 z" fill="#6f9fc8" />
<path d="M476.2 547.6 h6.6 l0.3 1 h-6.6 z" fill="#d9c28a" />
<circle cx="504.60" cy="543.70" r="6.70" fill="#f7ee10" />
<path d="M525 538.6 l3 2.8 l3.2 -3.6 l-0.8 4.6 l4 1.8 l-4.6 0.8 l-0.6 4.4 l-2.6 -3.8 l-3.6 1.6 l2.4 -3.4 z" fill="#6d93d6" />
<path d="M529.6 541 l0.4 8 l1.9 -1.9 l1.6 3 l1.2 -0.7 l-1.6 -2.9 l2.6 -0.3 z" fill="#f4f4f4" stroke="#333" stroke-width="0.3" />
<rect x="548.20" y="540.20" width="13.60" height="9.20" fill="#1a8fe6" />
<path d="M548.2 540.2 l6.8 -3.6 l6.8 3.6 z" fill="#0f6fc0" />
<path d="M549.4 541 l5.6 4.2 l5.6 -4.2 z" fill="#ffffff" />
<rect x="573.00" y="537.40" width="13.00" height="12.60" fill="#2a3842" />
<path d="M577 544.6 l4.6 -4.4 l2.2 2.2 l-4.6 4.4 z" fill="#3fd6c3" />
<path d="M577.4 540 l1.6 -1.4 l1.4 1.4 l-1.5 1.5 z" fill="#ffffff" />
<rect x="591.80" y="533.20" width="24.20" height="21.80" fill="#3b4d5b" />
<rect x="600.60" y="538.00" width="10.20" height="11.40" fill="#21a366" />
<rect x="605.60" y="538.00" width="5.20" height="5.60" fill="#33c481" />
<rect x="600.60" y="543.60" width="5.00" height="5.80" fill="#185c37" />
<rect x="605.60" y="543.60" width="5.20" height="5.80" fill="#107c41" />
<rect x="597.80" y="540.60" width="6.60" height="6.40" fill="#107c41" />
<text x="601.10" y="545.60" font-size="5" fill="#ffffff" text-anchor="middle" font-weight="bold" >X</text>
<rect x="622.60" y="538.20" width="9.60" height="8.20" fill="#29a8d8" rx="1.4"/>
<path d="M632.2 541 l3.4 -1.8 v6.2 l-3.4 -1.8 z" fill="#29a8d8" />
<circle cx="627.20" cy="542.20" r="2.10" fill="#e8392e" />
<path d="M626 546.4 l-1.2 2.6 h5 l-1.2 -2.6" fill="none" stroke="#29a8d8" stroke-width="0.6" />
<rect x="495.50" y="553.90" width="19.30" height="1.10" fill="#8fb8e0" />
<rect x="570.00" y="553.90" width="19.00" height="1.10" fill="#8fb8e0" />
<rect x="591.80" y="553.90" width="24.20" height="1.10" fill="#8fb8e0" />
<rect x="619.40" y="553.90" width="19.30" height="1.10" fill="#8fb8e0" />
<circle cx="661.20" cy="541.60" r="2.90" fill="#f6c443" />
<path d="M659 547.6 q-2.6 0 -2.6 -2.2 q0 -2 2.4 -2.2 q0.8 -2.2 3.4 -2 q2.2 0.2 2.8 2.2 q2.6 0 2.6 2.2 q0 2 -2.4 2 z" fill="#dbeeff" />
<text x="672.80" y="546.74" font-size="7.6" fill="#e8e8e8"  textLength="16.60" lengthAdjust="spacingAndGlyphs">21°C</text>
<path d="M701.6 545.2 l3 -3 l3 3" fill="none" stroke="#e8e8e8" stroke-width="0.8" />
<path d="M718.6 542.4 h1.6 l2.2 -2 v6.4 l-2.2 -2 h-1.6 z" fill="none" stroke="#d8d8d8" stroke-width="0.6" />
<path d="M723.8 541.8 q1.2 1.8 0 3.6 M725.2 540.8 q1.8 2.8 0 5.6" fill="none" stroke="#d8d8d8" stroke-width="0.5" />
<rect x="747.00" y="541.40" width="4.00" height="4.00" fill="#9aa" opacity="0.5"/>
<circle cx="779.40" cy="545.60" r="2.20" fill="#d9382c" />
<rect x="790.00" y="540.60" width="7.00" height="5.00" fill="none" stroke="#bbb" stroke-width="0.6" opacity="0.7"/>
<text x="733" y="549.6" font-size="11.8" fill="#10202c" stroke="#10202c" stroke-width="1.4" opacity="0.55" textLength="74.2" lengthAdjust="spacingAndGlyphs">© 2021 saym.</text>
<text x="733" y="549.3" font-size="11.8" fill="#f2f2f2" textLength="74.2" lengthAdjust="spacingAndGlyphs">© 2021 saym.</text>
<path d="M810.6 545.4 l1.6 -1.6 q1 -1 2 0 q1 1 0 2 l-1 1 M815.4 542.4 l-1.6 1.6" fill="none" stroke="#c8c8c8" stroke-width="0.6" />
<text x="829.90" y="547.02" font-size="8.4" fill="#f0f0f0" text-anchor="middle" font-family="'Liberation Serif',serif" >A</text>
<circle cx="845.20" cy="542.80" r="3.60" fill="#2b7de0" />
<circle cx="847.60" cy="545.60" r="1.50" fill="#e8452c" />
<circle cx="846.20" cy="546.60" r="0.90" fill="#f2c11e" />
<text x="876.80" y="541.50" font-size="6.4" fill="#f0f0f0" text-anchor="middle" >8:28</text>
<text x="859.90" y="551.90" font-size="6.4" fill="#f0f0f0"  textLength="34.50" lengthAdjust="spacingAndGlyphs">2021/06/24</text>
<path d="M904.6 540 h9 v6 h-5.4 l-1.8 1.8 v-1.8 h-1.8 z" fill="#f4f4f4" />
<path d="M906.2 542.2 h5.8 M906.2 543.8 h4" fill="none" stroke="#44505e" stroke-width="0.5" />
<circle cx="913.00" cy="546.20" r="1.50" fill="#f4f4f4" stroke="#44505e" stroke-width="0.5" />
<line x1="924.80" y1="533.20" x2="924.80" y2="555.00" stroke="#5a6a80" stroke-width="0.6" />
</g>
<g id="outer-window-controls">
<line x1="959.60" y1="8.40" x2="965.40" y2="8.40" stroke="#d6d6d6" stroke-width="0.8" />
<rect x="984.60" y="6.90" width="4.60" height="4.40" fill="none" stroke="#d6d6d6" stroke-width="0.8" />
<path d="M986 6.9 v-1.3 h4.6 v4.4 h-1.4" fill="none" stroke="#d6d6d6" stroke-width="0.8" />
<path d="M1009 5.8 l5.4 5.4 M1014.4 5.8 l-5.4 5.4" fill="none" stroke="#d6d6d6" stroke-width="0.9" />
</g>
</svg>
</body>
</html>
